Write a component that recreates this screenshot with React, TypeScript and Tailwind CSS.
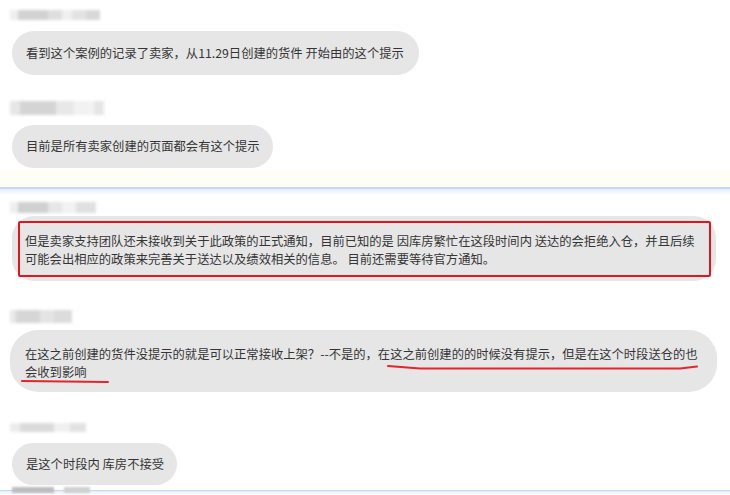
import React from 'react';

const Blur: React.FC<{ blocks: [number, string][]; h: number; ml?: number }> = ({ blocks, h }) => (
  <div className="flex items-center blur-[1.5px] ml-[10px]" style={{ height: h }}>
    {blocks.map(([w, c], i) => (
      <div key={i} style={{ width: w, height: h, background: c }} />
    ))}
  </div>
);

export default function App() {
  return (
    <div className="relative w-[730px] h-[495px] overflow-hidden bg-white font-['Noto_Sans_CJK_SC','Noto_Sans',sans-serif] text-[12.3px] text-[#353535]">
      {/* 上半部分 */}
      <div className="pt-[10px]">
        <Blur h={10} blocks={[[8, '#eeeeee'], [30, '#d2d2d2'], [14, '#dedede'], [10, '#f0f0f0'], [14, '#e2e2e2'], [14, '#d8d8d8']]} />
        <div className="mt-[11px] ml-[12px] w-[407px] h-[44px] rounded-full bg-[#e6e6e6] flex items-center pl-[14px] whitespace-nowrap">
          看到这个案例的记录了卖家，从11.29日创建的货件 开始由的这个提示
        </div>

        <div className="mt-[26px]">
          <Blur h={14} blocks={[[10, '#e6e6e6'], [36, '#d4d4d4'], [18, '#e8e8e8'], [20, '#f2f2f2'], [10, '#e6e6e6']]} />
        </div>
        <div className="mt-[10px] ml-[12px] w-[261px] h-[43px] rounded-full bg-[#e6e6e6] flex items-center pl-[14px] whitespace-nowrap">
          目前是所有卖家创建的页面都会有这个提示
        </div>
      </div>

      {/* 分隔 */}
      <div className="mt-[2px] h-[17px] bg-[#fffef6]" />
      <div className="h-[2px] bg-[#c5daf0]" />
      <div className="h-[6px] bg-gradient-to-b from-[#e4eef9] to-white" />

      {/* 红框消息 */}
      <div className="mt-[7px]">
        <Blur h={11} blocks={[[8, '#eeeeee'], [30, '#d0d0d0'], [14, '#e6e6e6'], [14, '#f2f2f2'], [20, '#e0e0e0']]} />
      </div>
      <div className="mt-[3px] ml-[12px] w-[704px] h-[65px] rounded-[22px] bg-[#e6e6e6] pt-[5px] pl-[6px]">
        <div className="w-[693px] h-[56px] border-2 border-[#e2141c] rounded-[2px] pt-[9px] pl-[5px] leading-[18px] whitespace-nowrap">
          但是卖家支持团队还未接收到关于此政策的正式通知，目前已知的是 因库房繁忙在这段时间内 送达的会拒绝入仓，并且后续
          <br />
          可能会出相应的政策来完善关于送达以及绩效相关的信息。 目前还需要等待官方通知。
        </div>
      </div>

      {/* 带下划线的消息 */}
      <div className="mt-[29px]">
        <Blur h={13} blocks={[[6, '#e8e8e8'], [24, '#d6d6d6'], [14, '#e4e4e4'], [18, '#dcdcdc']]} />
      </div>
      <div className="relative mt-[7px] ml-[10px] w-[707px] h-[62px] rounded-[28px] bg-[#e6e6e6] pt-[15px] pl-[15px] leading-[18px] whitespace-nowrap">
        在这之前创建的货件没提示的就是可以正常接收上架？--不是的，在这之前创建的的时候没有提示，但是在这个时段送仓的也
        <br />
        会收到影响
        <svg className="absolute left-0 top-0" width="707" height="62" fill="none">
          <path d="M12 51 Q55 51.5 98 52" stroke="#e2262b" strokeWidth="2" strokeLinecap="round" />
          <path d="M378 36 L410 38.5 L670 38.5 L687 36.5" stroke="#e2262b" strokeWidth="2" strokeLinecap="round" />
        </svg>
      </div>

      {/* 最后一条 */}
      <div className="mt-[31px]">
        <Blur h={9} blocks={[[10, '#ececec'], [34, '#dadada'], [16, '#f0f0f0'], [16, '#e2e2e2']]} />
      </div>
      <div className="mt-[11px] ml-[12px] w-[165px] h-[42px] rounded-full bg-[#e6e6e6] flex items-center pl-[14px] whitespace-nowrap">
        是这个时段内 库房不接受
      </div>

      {/* 底部 */}
      <div className="relative mt-[5px] h-[1px] bg-[#c5daf0]">
        <div className="absolute left-[12px] top-[-3px] flex gap-[10px] blur-[1px]">
          <div className="w-[42px] h-[6px] bg-[#bdbdbd]" />
          <div className="w-[26px] h-[6px] bg-[#d0d0d0]" />
        </div>
      </div>
      <div className="h-[4px] bg-gradient-to-b from-[#e4eef9] to-white" />
    </div>
  );
}
